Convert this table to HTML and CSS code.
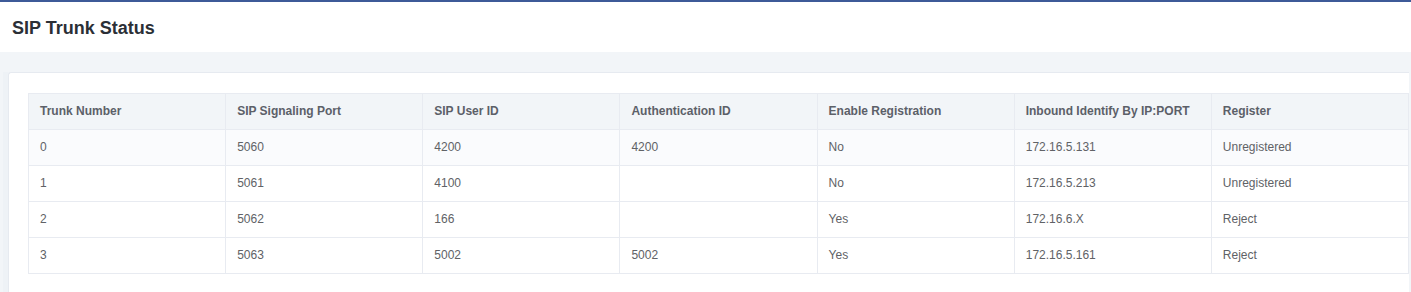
FILE: index.html
```html
<!DOCTYPE html>
<html>
<head>
<meta charset="utf-8">
<link rel="stylesheet" href="styles.css">
</head>
<body>
<div class="page">
  <header class="page-head">
    <h1 class="page-title">SIP Trunk Status</h1>
  </header>
  <div class="band"></div>
  <div class="content">
    <div class="side-strip"></div>
    <section class="card">
      <table class="grid">
        <thead>
          <tr>
            <th>Trunk Number</th>
            <th>SIP Signaling Port</th>
            <th>SIP User ID</th>
            <th>Authentication ID</th>
            <th>Enable Registration</th>
            <th>Inbound Identify By IP:PORT</th>
            <th>Register</th>
          </tr>
        </thead>
        <tbody>
          <tr class="hl">
            <td>0</td><td>5060</td><td>4200</td><td>4200</td><td>No</td><td>172.16.5.131</td><td>Unregistered</td>
          </tr>
          <tr>
            <td>1</td><td>5061</td><td>4100</td><td></td><td>No</td><td>172.16.5.213</td><td>Unregistered</td>
          </tr>
          <tr>
            <td>2</td><td>5062</td><td>166</td><td></td><td>Yes</td><td>172.16.6.X</td><td>Reject</td>
          </tr>
          <tr>
            <td>3</td><td>5063</td><td>5002</td><td>5002</td><td>Yes</td><td>172.16.5.161</td><td>Reject</td>
          </tr>
        </tbody>
      </table>
    </section>
  </div>
</div>
</body>
</html>
```

FILE: styles.css
```css
html, body {
  margin: 0;
  padding: 0;
  background: #ffffff;
  font-family: "Liberation Sans", Arial, sans-serif;
  overflow: hidden;
}
.page {
  width: 1411px;
  height: 292px;
  display: flex;
  flex-direction: column;
}
.page-head {
  height: 50px;
  background: #ffffff;
  border-top: 2px solid #3d5a98;
  display: flex;
  align-items: center;
  padding-left: 12px;
}
.page-title {
  margin: 0;
  font-size: 18px;
  font-weight: bold;
  color: #2b2f36;
  position: relative;
  top: 1px;
}
.band {
  height: 20px;
  background: #f2f5f8;
}
.content {
  flex: 1;
  display: flex;
  background: #f2f5f8;
}
.side-strip {
  width: 5px;
  margin-left: 3px;
  background: #eef2f6;
}
.card {
  flex: 1;
  background: #ffffff;
  border-top: 1px solid #e6eaf0;
  border-left: 1px solid #e6eaf0;
  border-top-left-radius: 3px;
  padding: 20px 0 0 19px;
  margin-right: 2px;
}
.grid {
  border-collapse: collapse;
  table-layout: fixed;
  width: 1381px;
  font-size: 12px;
  color: #606266;
}
.grid th, .grid td {
  border: 1px solid #e8ebf1;
  height: 33px;
  padding: 0 0 2px 11px;
  text-align: left;
  vertical-align: middle;
  white-space: nowrap;
}
.grid th {
  background: #f2f5f8;
  font-weight: bold;
  color: #5c6068;
}
.grid tr.hl td {
  background: #fafbfd;
}
```
